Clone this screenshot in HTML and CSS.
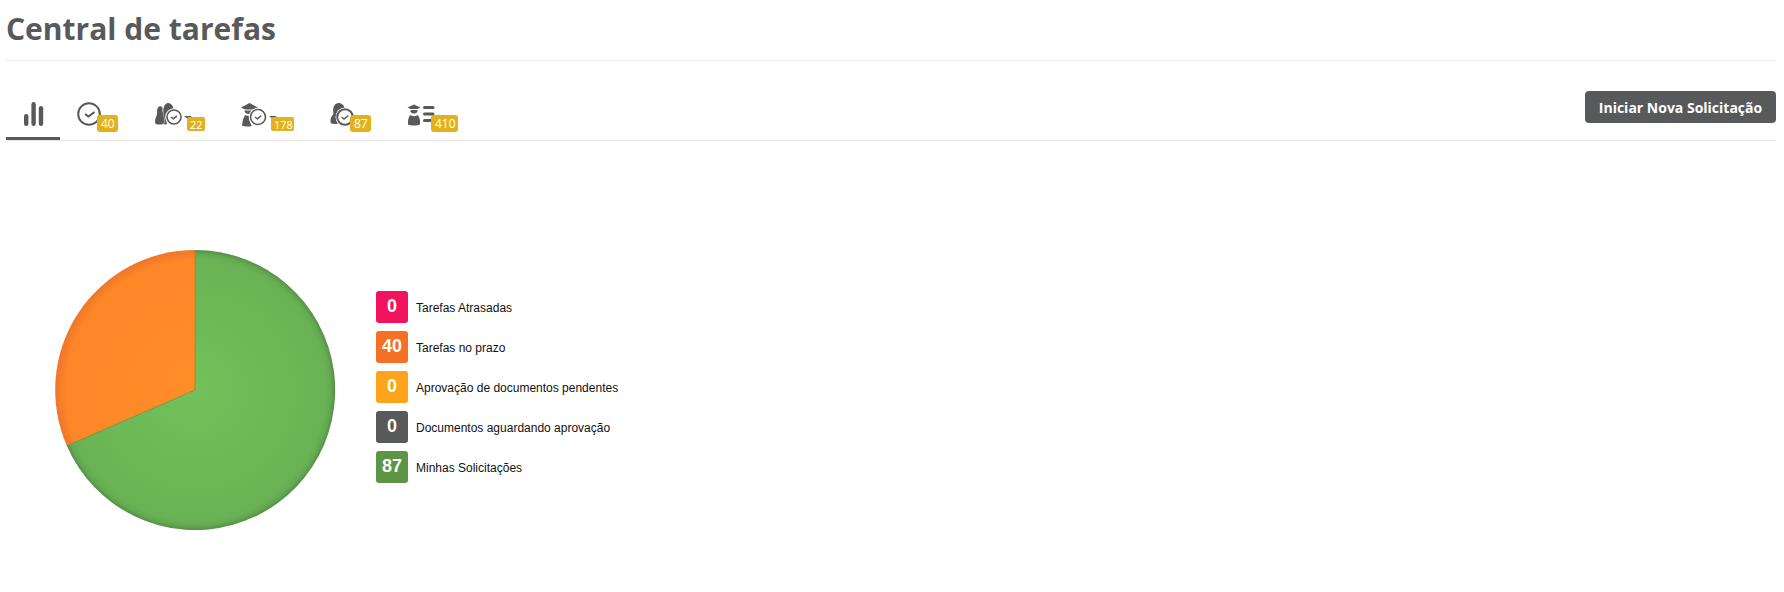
FILE: index.html
```html
<!DOCTYPE html>
<html lang="pt-BR">
<head>
<meta charset="utf-8">
<title>Central de tarefas</title>
<link rel="stylesheet" href="styles.css">
</head>
<body>
<main class="page">
  <header class="page-header"><h1 class="page-title">Central de tarefas</h1></header>
  <nav class="tabbar">
    <div class="tabs">
      <a class="tab tab-chart is-active">
        <svg class="icon" width="20" height="24" viewBox="0 0 20 24"><rect x="0" y="12" width="4.4" height="12" rx="2.2"/><rect x="7.4" y="0" width="4.4" height="24" rx="2.2"/><rect x="14.8" y="4" width="4.4" height="20" rx="2.2"/></svg>
      </a>
      <a class="tab tab-clock">
        <svg class="icon" width="24" height="24" viewBox="0 0 24 24"><circle cx="12" cy="12" r="10.8" class="ring"/><path d="M8 12l3.500 2.500 6-4.500" class="tick"/></svg>
        <span class="badge badge-lg">40</span>
      </a>
      <a class="tab tab-people">
        <svg class="icon" width="38" height="24" viewBox="0 0 38 24"><path d="M4 3.500c2.500-1 4 .8 3.500 3.500-.2 1.500.5 3 1 5 .5 3 1 6 0 9-3 .8-6 .8-8-.3C-1 17 1.500 14 2 11 2.500 8 1.500 5 4 3.500z"/><path d="M12.500 0c3.500 0 5.500 2.500 6 5.500-3 .5-6 2.500-7 5.500-1 3-.5 7 .5 10-1.500.8-2.500.6-3 .3 1-3 .5-7-.5-10C8 8 8 1 12.500 0z"/><circle cx="19" cy="14" r="8.800" class="halo"/><circle cx="19" cy="14" r="7" class="ring-thin"/><path d="M16 14l2.300 1.800 3.700-3" class="tick-thin"/><path d="M29 13h8l-4 3z"/></svg>
        <span class="badge">22</span>
      </a>
      <a class="tab tab-grad">
        <svg class="icon" width="38" height="24" viewBox="0 0 38 24"><path d="M0 4.500L8.500 0 17 4.500 13 6.400H4z"/><path d="M3.500 7.500H13c0 1.500-.8 2.500-2 3-2 .8-4 .5-5.500 0-1-.5-2-1.500-2-3z"/><path d="M4.500 12c1.500 1 3.500 1 5.500.5-2 3-1.500 7 1 10.500-3 .8-7 .8-10-.2C1.500 18 2.500 14 4.500 12z"/><circle cx="17" cy="14" r="9.300" class="halo"/><circle cx="17" cy="14" r="7.500" class="ring-thin"/><path d="M14 14l2.300 1.800 3.900-3" class="tick-thin"/><path d="M28 13h8l-4 3z"/></svg>
        <span class="badge">178</span>
      </a>
      <a class="tab tab-student">
        <svg class="icon" width="24" height="24" viewBox="0 0 24 24"><path d="M8 0c3.500 0 6 2 6.500 5-3 .5-6 2-7.500 5-1 3-.5 7 1 10.500-2 .8-5 .8-7-.2C-.500 17 1.500 13 3.500 11 2.500 6 3.500 1 8 0z"/><circle cx="15" cy="14" r="9.500" class="halo"/><circle cx="15" cy="14" r="7.800" class="ring"/><path d="M11.500 14l2.500 2 4.300-3.500" class="tick-thin"/></svg>
        <span class="badge badge-lg">87</span>
      </a>
      <a class="tab tab-list">
        <svg class="icon" width="28" height="22" viewBox="0 0 28 22"><path d="M.500 3.500L7 .500l6.500 3-3 1.500H3.500z"/><path d="M3.500 6h7c.2 2-.8 3.500-3.500 3.500S3.300 8 3.500 6z"/><path d="M3 11c2 1.500 6 1.500 8 0 1.800 3 2.200 6 2 9.500-3 1.300-9 1.300-12 0C.800 17 1.200 14 3 11z"/><rect x="16" y="2" width="11.500" height="3" rx="1.500"/><rect x="16" y="8.500" width="11.500" height="3" rx="1.500"/><rect x="16" y="15" width="11.500" height="3" rx="1.500"/></svg>
        <span class="badge badge-lg">410</span>
      </a>
    </div>
    <button class="primary-btn" type="button">Iniciar Nova Solicitação</button>
  </nav>
  <section class="dashboard">
    <svg class="pie" width="282" height="282" viewBox="-141.200 -141 282 282" role="img" aria-label="Distribuição de tarefas">
      <defs>
        <radialGradient id="pieGreen" gradientUnits="userSpaceOnUse" cx="0" cy="0" r="140">
          <stop offset="0" stop-color="#73c15a"/>
          <stop offset=".93" stop-color="#6ab355"/>
          <stop offset=".97" stop-color="#64a951"/>
          <stop offset="1" stop-color="#568f47"/>
        </radialGradient>
        <radialGradient id="pieOrange" gradientUnits="userSpaceOnUse" cx="0" cy="0" r="140">
          <stop offset="0" stop-color="#ff8d27"/>
          <stop offset=".92" stop-color="#fe8727"/>
          <stop offset="1" stop-color="#f0762a"/>
        </radialGradient>
      </defs>
      <path d="M0 0L0 -140A140 140 0 1 1 -128.400 55.800Z" fill="url(#pieGreen)"/>
      <path d="M0 0L-128.400 55.800A140 140 0 0 1 0 -140Z" fill="url(#pieOrange)"/>
      <path d="M0 -140V0L-128.400 55.800" class="pie-edge"/>
    </svg>
    <ul class="legend">
      <li class="legend-item"><span class="swatch swatch-red">0</span><span class="legend-label">Tarefas Atrasadas</span></li>
      <li class="legend-item"><span class="swatch swatch-orange">40</span><span class="legend-label">Tarefas no prazo</span></li>
      <li class="legend-item"><span class="swatch swatch-amber">0</span><span class="legend-label">Aprovação de documentos pendentes</span></li>
      <li class="legend-item"><span class="swatch swatch-gray">0</span><span class="legend-label">Documentos aguardando aprovação</span></li>
      <li class="legend-item"><span class="swatch swatch-green">87</span><span class="legend-label">Minhas Solicitações</span></li>
    </ul>
  </section>
</main>
</body>
</html>
```
FILE: styles.css
```css
* { box-sizing: border-box; }
html, body { margin: 0; padding: 0; background: #fff; }
body { height: 592px; overflow: hidden; font-family: "Open Sans", sans-serif; color: #58595b; }
.page { padding: 0 8px 0 6px; }
.page-header { height: 61px; border-bottom: 1px solid #eeeeee; }
.page-title { margin: 0; padding: 9px 0 0; font-size: 30px; line-height: 40px; font-weight: 700; color: #58595b; }
.tabbar { display: flex; justify-content: space-between; align-items: flex-start; padding-top: 30px; height: 80px; border-bottom: 1px solid #e6e6e6; }
.tabs { display: flex; }
.tab { position: relative; display: block; height: 49px; border-bottom: 3px solid transparent; }
.tab.is-active { border-bottom-color: #58595b; }
.icon { display: block; fill: #58595b; }
.ring { fill: #fff; stroke: #58595b; stroke-width: 2; }
.ring-thin { fill: #fff; stroke: #58595b; stroke-width: 1.6; }
.halo { fill: #fff; }
.tick { fill: none; stroke: #58595b; stroke-width: 2; }
.tick-thin { fill: none; stroke: #58595b; stroke-width: 1.5; }
.tab-chart { width: 54px; padding: 11px 0 0 18px; }
.tab-clock { width: 75px; padding: 11px 0 0 17px; }
.tab-people { width: 87px; padding: 12px 0 0 20px; }
.tab-grad { width: 95px; padding: 12px 0 0 19px; }
.tab-student { width: 75px; padding: 12px 0 0 13px; }
.tab-list { width: 90px; padding: 13px 0 0 15px; }
.badge { position: absolute; top: 26px; height: 14px; padding: 0 3px; border-radius: 2px; background: #e2b21d; color: #fff; font-size: 11px; line-height: 15px; text-align: center; }
.badge-lg { top: 24px; height: 17px; padding: 0 4px; font-size: 12px; line-height: 18px; border-radius: 3px; }
.tab-clock .badge { left: 37px; width: 21px; }
.tab-people .badge { left: 52px; width: 18px; }
.tab-grad .badge { left: 49px; width: 23px; }
.tab-student .badge { left: 33px; width: 21px; }
.tab-list .badge { left: 39px; width: 27px; }
.primary-btn { width: 191px; height: 32px; padding: 0; border: 0; border-radius: 4px; background: #58595b; color: #fff; font-family: "Open Sans", sans-serif; font-size: 14px; font-weight: 700; }
.dashboard { display: flex; align-items: flex-start; }
.pie { display: block; margin: 108px 0 0 48px; }
.pie-edge { fill: none; stroke: #5d8f3f; stroke-width: .8; }
.legend { list-style: none; margin: 150px 0 0 40px; padding: 0; display: flex; flex-direction: column; gap: 8px; }
.legend-item { display: flex; align-items: center; gap: 8px; height: 32px; font-family: "Liberation Sans", Arial, sans-serif; font-size: 12px; color: #111; }
.legend-label { padding-top: 2px; }
.swatch { width: 32px; height: 32px; border-radius: 3px; color: #fff; font-size: 18px; font-weight: 700; line-height: 30px; text-align: center; }
.swatch-red { background: #f2135f; }
.swatch-orange { background: #f57023; }
.swatch-amber { background: #fda41a; }
.swatch-gray { background: #58595b; }
.swatch-green { background: #5c9645; }
```
